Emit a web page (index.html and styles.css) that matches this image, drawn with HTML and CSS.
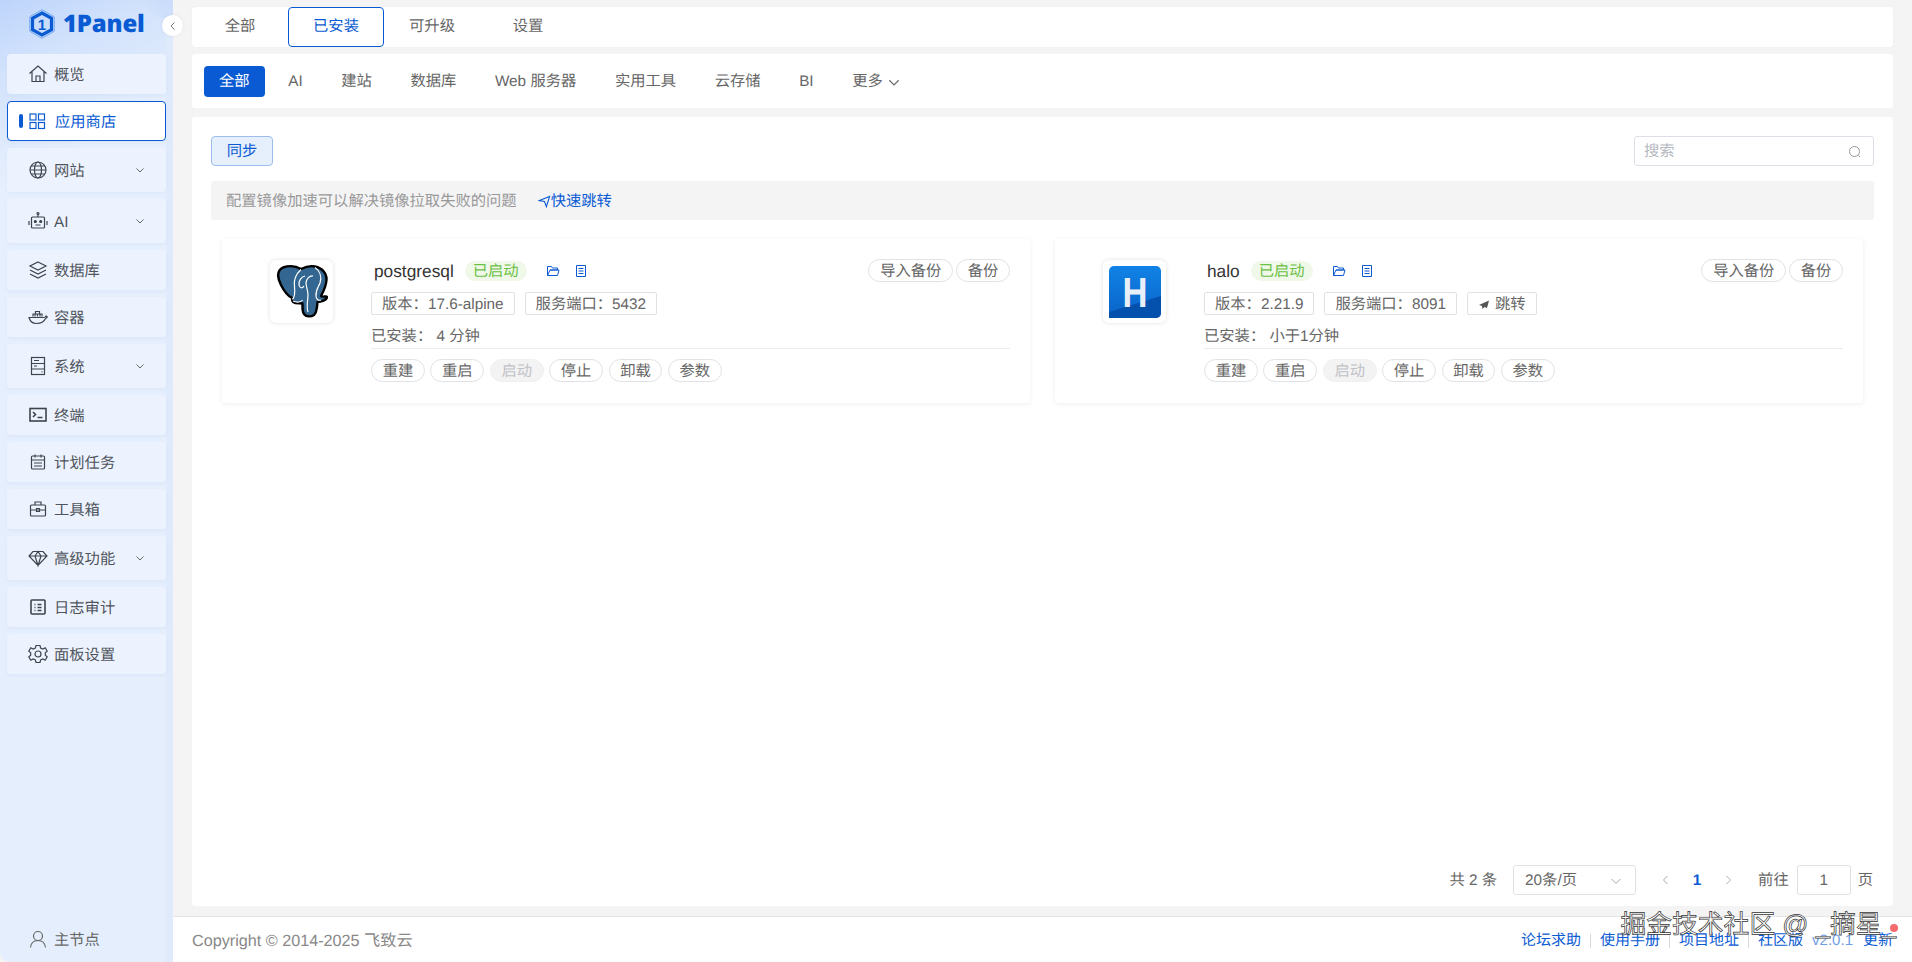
FILE: index.html
```html
<!DOCTYPE html>
<html lang="zh-CN">
<head>
<meta charset="utf-8">
<title>1Panel</title>
<link rel="stylesheet" href="styles.css">
</head>
<body>
<div class="app">
  <aside class="sidebar">
    <div class="logo">
      <svg class="logo-mark" viewBox="0 0 26 30"><path d="M13 .8 25.200 7.700v14.600L13 29.200.8 22.300V7.700z" fill="none" stroke="#6ea6f3" stroke-width="1"/><path d="M13 4 22.500 9.300v11.400L13 26 3.500 20.700V9.300z" fill="none" stroke="#0a5bd3" stroke-width="3.200"/><text x="13" y="20.500" text-anchor="middle" class="logo-one">1</text></svg>
      <span class="logo-text">1Panel</span>
    </div>
    <span class="collapse"><svg viewBox="0 0 12 12"><path d="M7.500 2.500 4 6l3.500 3.500" fill="none" stroke="#777" stroke-width="1"/></svg></span>
    <nav class="nav">
      <a class="item"><svg class="ico" viewBox="0 0 20 20"><path d="M1.500 9.500 10 2l8.500 7.500M4 8v9.500h12V8M8 17.500V12h4v5.500" /></svg><span>概览</span></a>
      <a class="item active"><i class="bar"></i><svg class="ico" viewBox="0 0 20 20"><rect x="3" y="3" width="6" height="6"/><rect x="11.500" y="3" width="6" height="6"/><rect x="3" y="11.500" width="6" height="6"/><rect x="11.500" y="11.500" width="6" height="6"/></svg><span>应用商店</span></a>
      <a class="item tall"><svg class="ico" viewBox="0 0 20 20"><circle cx="10" cy="10" r="8"/><ellipse cx="10" cy="10" rx="3.500" ry="8"/><path d="M2 10h16M3 6h14M3 14h14"/></svg><span>网站</span><svg class="chev" viewBox="0 0 12 12"><path d="M2.500 4.500 6 8l3.500-3.500"/></svg></a>
      <a class="item tall"><svg class="ico" viewBox="0 0 20 20"><rect x="3.500" y="6" width="13" height="11" rx="1"/><path d="M10 6V3M1 10v4M19 10v4M7.500 14h5"/><circle cx="10" cy="2.500" r="1"/><circle cx="7.300" cy="10.500" r="1" fill="#444"/><circle cx="12.700" cy="10.500" r="1" fill="#444"/></svg><span>AI</span><svg class="chev" viewBox="0 0 12 12"><path d="M2.500 4.500 6 8l3.500-3.500"/></svg></a>
      <a class="item"><svg class="ico" viewBox="0 0 20 20"><path d="M10 2 18 6l-8 4-8-4zM2 10l8 4 8-4M2 14l8 4 8-4"/></svg><span>数据库</span></a>
      <a class="item"><svg class="ico" viewBox="0 0 20 20"><path d="M1 10.500h15c1 0 2-1.500 2-1.500s1 1 1.500.5c-.5 1.500-2 2-2 2-1.500 3.500-5 5-9 5-4 0-6.500-2.500-7.500-6zM5 9.500V7h9v2.500M7 9.500V7M9.500 9.500V7M12 9.500V7M7.500 7V4.500h4V7"/></svg><span>容器</span></a>
      <a class="item tall"><svg class="ico" viewBox="0 0 20 20"><rect x="3.500" y="1.500" width="13" height="17"/><path d="M3.500 7.500h13M3.500 13h13M6 4.500h5M6 10h3M13.500 15.800h1"/></svg><span>系统</span><svg class="chev" viewBox="0 0 12 12"><path d="M2.500 4.500 6 8l3.500-3.500"/></svg></a>
      <a class="item"><svg class="ico thick" viewBox="0 0 20 20"><rect x="2" y="3.500" width="16" height="12.500"/><path d="M5 7l2.500 2.500L5 12M9.500 12.500h5"/></svg><span>终端</span></a>
      <a class="item"><svg class="ico" viewBox="0 0 20 20"><rect x="3.500" y="4" width="13" height="13" rx="1"/><path d="M3.500 8h13M7 2.500v3M13 2.500v3M6 11h8M6 14h8"/></svg><span>计划任务</span></a>
      <a class="item"><svg class="ico" viewBox="0 0 20 20"><rect x="2.500" y="6" width="15" height="11" rx="1"/><path d="M7 6V3h6v3M2.500 11h15M8.500 9.500h3v3h-3z"/></svg><span>工具箱</span></a>
      <a class="item tall"><svg class="ico" viewBox="0 0 20 20"><path d="M5 3.500h10L19 8l-9 9.500L1 8zM1 8h18M7 8l3 9.500L13 8l-3-4.500z"/></svg><span>高级功能</span><svg class="chev" viewBox="0 0 12 12"><path d="M2.500 4.500 6 8l3.500-3.500"/></svg></a>
      <a class="item"><svg class="ico thick" viewBox="0 0 20 20"><rect x="3" y="3" width="14" height="14" rx="1"/><path d="M6.500 7.500h1M9.500 7.500h4M6.500 10.500h1M9.500 10.500h4M6.500 13.500h1M9.500 13.500h4" /></svg><span>日志审计</span></a>
      <a class="item"><svg class="ico" viewBox="0 0 20 20"><path d="M8 1.500h4l.6 2.500 2.300 1 2.300-1.300 2 3.400-1.900 1.700v2.400l1.900 1.700-2 3.400-2.300-1.300-2.300 1-.6 2.500H8l-.6-2.500-2.300-1-2.300 1.300-2-3.400 1.900-1.700V8.800L.8 7.100l2-3.400L5.100 5l2.300-1z"/><circle cx="10" cy="10" r="3"/></svg><span>面板设置</span></a>
    </nav>
    <div class="node"><svg class="ico grey" viewBox="0 0 20 20"><circle cx="10" cy="7" r="4.500"/><path d="M2.500 18.500c.5-4.500 3.500-7 7.500-7s7 2.500 7.500 7"/></svg><span>主节点</span></div>
  </aside>

  <div class="right">
    <main class="main">
      <div class="tabs">
        <a class="tab">全部</a><a class="tab on">已安装</a><a class="tab">可升级</a><a class="tab">设置</a>
      </div>
      <div class="filters">
        <a class="fbtn sel">全部</a><a class="fbtn">AI</a><a class="fbtn">建站</a><a class="fbtn">数据库</a><a class="fbtn">Web 服务器</a><a class="fbtn">实用工具</a><a class="fbtn">云存储</a><a class="fbtn">BI</a><a class="fbtn">更多<svg class="chev small" viewBox="0 0 12 12"><path d="M2 4.500 6 8.500l4-4"/></svg></a>
      </div>
      <section class="content">
        <div class="head">
          <a class="sync">同步</a>
          <div class="search"><span>搜索</span><svg viewBox="0 0 14 14"><circle cx="6.500" cy="6.500" r="5"/><path d="M10.500 10.500l1.500 1.500"/></svg></div>
        </div>
        <div class="banner"><span>配置镜像加速可以解决镜像拉取失败的问题</span><a class="jump"><svg viewBox="0 0 14 14"><path d="M1.500 6 12.500 1.500 9 12.500 7 7z"/></svg>快速跳转</a></div>
        <div class="cards">
          <article class="card">
            <div class="thumb">
              <svg class="pg" viewBox="-1 -1 52 55">
                <path d="M6 2.500C12 .5 19 1 24 4 28 2 33 .5 38 1.500 45 3 50 8 49.500 15 49 22 46 27 44 31 46 33 49 30 50 32 50 35 44 37 40.500 37 40 42 40 47 37 50 34 52 29 52 27 49 25 46 25.500 42 25.500 38.500 22 38 19 39 16 37 15 36 15 34 15 33 11 31 7 26 4 20 1 14-1 6 6 2.500z" fill="#336791" stroke="#000" stroke-width="2.400" stroke-linejoin="round"/>
                <path d="M24 4.500C19 9 16.500 15 17.500 22 18 27 18.500 31 15.500 34.500M38 2.500C43 6 45 12 43 18 41.500 22 38.500 25 39 31 39.200 34 41 36 44 35M28 11C24 12 21.500 16 22 20 22.500 23 25.500 24 27 21M36 11C32.500 10.500 29 14 29 18 29 22 31 25 31 30 31 36 29 41 31 47M16 36C20 38 24 37 25.500 35" fill="none" stroke="#fff" stroke-width="1.200"/>
              </svg>
            </div>
            <div class="info">
              <div class="row1">
                <span class="name">postgresql</span><span class="status">已启动</span>
                <svg class="mini first" viewBox="0 0 14 14"><path d="M1.500 11.500v-9h4l1 1.500h5v2H4l-2.500 5.500h10L13 6H4"/></svg>
                <svg class="mini" viewBox="0 0 14 14"><path d="M2.500 1.500h9v11h-9zM4.500 4.500h5M4.500 7h5M4.500 9.500h5"/></svg>
                <span class="spacer"></span>
                <a class="pill">导入备份</a><a class="pill">备份</a>
              </div>
              <div class="row2"><span class="tag">版本：17.6-alpine</span><span class="tag">服务端口：5432</span></div>
              <div class="row3">已安装： 4 分钟</div>
              <div class="row4"><a class="pill">重建</a><a class="pill">重启</a><a class="pill off">启动</a><a class="pill">停止</a><a class="pill">卸载</a><a class="pill">参数</a></div>
            </div>
          </article>
          <article class="card">
            <div class="thumb">
              <svg class="halo" viewBox="0 0 52 52"><defs><linearGradient id="hg" x1="0" y1="0" x2="0" y2="1"><stop offset="0" stop-color="#1183e6"/><stop offset="1" stop-color="#0a62c7"/></linearGradient></defs><rect width="52" height="52" rx="5" fill="url(#hg)"/><path d="M0 52V46L52 30v17a5 5 0 0 1-5 5z" fill="#0450ad"/><text x="26" y="40.500" text-anchor="middle" class="halo-h" textLength="25" lengthAdjust="spacingAndGlyphs">H</text></svg>
            </div>
            <div class="info">
              <div class="row1">
                <span class="name">halo</span><span class="status">已启动</span>
                <svg class="mini first" viewBox="0 0 14 14"><path d="M1.500 11.500v-9h4l1 1.500h5v2H4l-2.500 5.500h10L13 6H4"/></svg>
                <svg class="mini" viewBox="0 0 14 14"><path d="M2.500 1.500h9v11h-9zM4.500 4.500h5M4.500 7h5M4.500 9.500h5"/></svg>
                <span class="spacer"></span>
                <a class="pill">导入备份</a><a class="pill">备份</a>
              </div>
              <div class="row2"><span class="tag">版本：2.21.9</span><span class="tag">服务端口：8091</span><span class="tag"><svg class="send" viewBox="0 0 12 12"><path d="M11 1.500 1 6l3 1 .5 3 2-2 2.500 1z"/></svg>跳转</span></div>
              <div class="row3">已安装： 小于1分钟</div>
              <div class="row4"><a class="pill">重建</a><a class="pill">重启</a><a class="pill off">启动</a><a class="pill">停止</a><a class="pill">卸载</a><a class="pill">参数</a></div>
            </div>
          </article>
        </div>
        <div class="pager">
          <span>共 2 条</span>
          <div class="select"><span>20条/页</span><svg viewBox="0 0 12 12"><path d="M1.500 4 6 8.500 10.500 4"/></svg></div>
          <svg class="arrow" viewBox="0 0 12 12"><path d="M7.500 2 3.500 6l4 4"/></svg>
          <b class="cur">1</b>
          <svg class="arrow next" viewBox="0 0 12 12"><path d="M4.500 2l4 4-4 4"/></svg>
          <span class="goto">前往</span>
          <div class="pageinput">1</div>
          <span>页</span>
        </div>
      </section>
    </main>
    <footer class="footer">
      <span class="copy">Copyright © 2014-2025 飞致云</span>
      <div class="links"><a>论坛求助</a><i></i><a>使用手册</a><i></i><a>项目地址</a><i></i><a>社区版</a><a class="ver">v2.0.1</a><a class="upd">更新</a></div>
      <span class="dot"></span>
      <span class="watermark">掘金技术社区 @ _摘星_</span>
    </footer>
  </div>
</div>
</body>
</html>
```
FILE: styles.css
```css
* { box-sizing: border-box; }
html, body { margin: 0; height: 100%; }
body {
  font-family: "Liberation Sans", "Noto Sans CJK SC", sans-serif;
  font-size: 15.300px;
  line-height: 20px;
  text-rendering: geometricPrecision;
  color: #646a73;
  background: #f4f4f5;
  overflow: hidden;
}
a { color: inherit; text-decoration: none; }
.app { display: flex; height: 962px; }

/* sidebar */
.sidebar {
  position: relative;
  flex: 0 0 173px;
  display: flex;
  flex-direction: column;
  padding: 0 7px;
  border-bottom-left-radius: 10px;
  background:
    radial-gradient(circle at 168px -8px, #c6daf9 0, #d0e1fb 26px, rgba(226,236,252,0) 27px),
    linear-gradient(90deg, rgba(223,234,252,0) 165px, #dfeafc 167px),
    linear-gradient(155deg, #bdd4fb 0, #d3e3fc 70px, #e6effd 170px, #e5eefc 100%);
}
.logo { height: 54px; display: flex; align-items: center; padding: 0 0 6px 22px; gap: 8px; }
.logo-mark { width: 26px; height: 30px; }
.logo-one { font: 700 15px "Liberation Sans", sans-serif; fill: #0a5bd3; }
.logo-text { font: 800 24px/30px "Open Sans", sans-serif; color: #0a5bd3; letter-spacing: -.2px; }
.collapse {
  position: absolute; left: 162px; top: 15px;
  width: 21px; height: 21px; border-radius: 50%;
  background: #fff; display: flex; align-items: center; justify-content: center;
  box-shadow: 0 0 4px rgba(0,0,0,.06);
  z-index: 2;
}
.collapse svg { width: 12px; height: 12px; }
.nav { display: flex; flex-direction: column; gap: 7px; }
.item {
  position: relative;
  height: 40px;
  display: flex; align-items: center;
  padding-left: 21px;
  border-radius: 4px;
  background: #edf3fe;
  box-shadow: 0 2px 3px rgba(170,195,235,.14);
  color: #50555d;
}
.item span, .node span { padding-top: 4px; }
.item.tall { height: 44px; }
.item .ico { margin-right: 6px; }
.ico { width: 20px; height: 20px; flex: none; fill: none; stroke: #3f444c; stroke-width: 1.200; }
.ico.thick { stroke-width: 1.600; }
.ico.grey { stroke: #666; }
.chev { width: 12px; height: 12px; fill: none; stroke: #666; stroke-width: 1; margin-left: auto; margin-right: 20px; }
.chev.small { width: 14px; height: 14px; margin: 0 0 0 4px; }
.item.active {
  background: #fff;
  border: 1px solid #0a5bd3;
  color: #0a5bd3;
  padding-left: 11px;
}
.item.active .ico { stroke: #0a5bd3; margin-right: 8px; }
.bar { width: 4px; height: 14px; border-radius: 2px; background: #0a5bd3; margin-right: 4px; }
.node {
  margin-top: auto;
  height: 46px;
  display: flex; align-items: center; gap: 6px;
  padding-left: 21px;
  color: #666;
}

/* right column */
.right { flex: 1; min-width: 0; display: flex; flex-direction: column; }
.main { flex: 1; min-height: 0; display: flex; flex-direction: column; padding: 7px 19px 10px; }
.tabs {
  height: 40px; display: flex; background: #fff; border-radius: 3px;
  box-shadow: 0 0 1px rgba(0,0,0,.1);
}
.tab {
  width: 96px; display: flex; align-items: center; justify-content: center;
  color: #666;
}
.tab.on { border: 1px solid #0a5bd3; border-radius: 4px; color: #0a5bd3; }
.filters {
  margin-top: 7px; height: 54px; display: flex; align-items: center; gap: 8.600px;
  padding-left: 12px; background: #fff; border-radius: 3px;
}
.fbtn { height: 31px; padding: 2px 15px 0; display: flex; align-items: center; color: #666; border-radius: 4px; white-space: nowrap; }
.fbtn.sel { background: #0a5bd3; color: #fff; }
.content {
  margin-top: 9px; flex: 1; min-height: 0;
  display: flex; flex-direction: column;
  padding: 19px 19px 11px;
  background: #fff; border-radius: 3px;
}
.head { display: flex; justify-content: space-between; height: 30px; }
.sync {
  width: 62px; padding-top: 2px; display: flex; align-items: center; justify-content: center;
  background: #e6effc; border: 1px solid #9dbdee; border-radius: 4px; color: #0a5bd3;
}
.search {
  width: 240px; display: flex; align-items: center; justify-content: space-between;
  padding: 2px 11px 0 9px; border: 1px solid #dcdfe6; border-radius: 3px; color: #b5b8bf;
}
.search svg { width: 14px; height: 14px; fill: none; stroke: #999; stroke-width: 1; }
.banner {
  margin-top: 15px; height: 39px; display: flex; align-items: center; padding: 2px 0 0 15px;
  background: #f4f4f5; border-radius: 3px; color: #999;
}
.jump { display: flex; align-items: center; margin-left: 21px; color: #0a5bd3; }
.jump svg { width: 13px; height: 13px; fill: none; stroke: #0a5bd3; stroke-width: 1.200; }
.cards { margin-top: 19px; padding: 0 11px; display: grid; grid-template-columns: 1fr 1fr; gap: 25px; }
.card {
  height: 164px; display: flex; padding: 20px 20px 0 48px;
  background: #fff; border-radius: 3px;
  box-shadow: 0 1px 5px rgba(0,0,0,.07);
}
.thumb {
  width: 63px; height: 63px; flex: none; margin-top: 1px; margin-right: 38px;
  display: flex; align-items: center; justify-content: center;
  border-radius: 6px; box-shadow: 0 0 4px rgba(0,0,0,.13);
}
.pg { width: 52px; height: 55px; }
.halo { width: 52px; height: 52px; }
.halo-h { font: 700 42px "Liberation Sans", sans-serif; fill: #e9eff8; }
.info { flex: 1; min-width: 0; }
.row1 { display: flex; align-items: center; height: 23px; }
.name { font-size: 17.300px; color: #333; margin: 0 11px 0 3px; }
.status {
  height: 20px; padding: 2px 8px 0; display: flex; align-items: center;
  border-radius: 10px; background: #eff8e9; color: #6cc044;
}
.mini { width: 14px; height: 14px; fill: none; stroke: #0a5bd3; stroke-width: 1; }
.mini.first { margin: 0 14px 0 19px; }
.spacer { flex: 1; }
.pill {
  height: 23px; padding: 2px 10.700px 0; display: inline-flex; align-items: center;
  border: 1px solid #e0e2e6; border-radius: 12px; color: #666; background: #fff;
  white-space: nowrap;
}
.row1 .pill + .pill { margin-left: 3px; }
.pill.off { background: #f3f3f4; color: #c0c2c6; border-color: #f0f0f1; }
.row2 { display: flex; gap: 10px; margin-top: 10px; }
.tag {
  height: 23px; padding: 2px 10px 0; display: inline-flex; align-items: center;
  border: 1px solid #dfe1e5; border-radius: 2px; color: #666; white-space: nowrap;
}
.send { width: 12px; height: 12px; fill: #555; margin-right: 5px; }
.row3 { height: 34px; line-height: 43px; border-bottom: 1px solid #ebecee; color: #666; white-space: pre; }
.row4 { display: flex; gap: 5.400px; margin-top: 10px; }
.pager { margin-top: auto; display: flex; align-items: center; justify-content: flex-end; padding-right: 1px; color: #666; height: 30px; }
.pager > span, .cur { padding-top: 2px; }
.select {
  width: 123px; height: 30px; margin-left: 16px; display: flex; align-items: center; justify-content: space-between;
  padding: 2px 13px 0 11px; border: 1px solid #dfe1e5; border-radius: 3px;
}
.select svg { width: 12px; height: 12px; fill: none; stroke: #aaa; stroke-width: 1; }
.arrow { width: 12px; height: 12px; fill: none; stroke: #aaa; stroke-width: 1; margin-left: 24px; }
.cur { width: 50px; text-align: center; color: #0a5bd3; }
.arrow.next { margin-left: 0; }
.goto { margin-left: 24px; }
.pageinput {
  width: 54px; height: 30px; margin: 0 7px 0 8px; padding-top: 2px; display: flex; align-items: center; justify-content: center;
  border: 1px solid #dfe1e5; border-radius: 3px;
}
.footer {
  position: relative;
  height: 46px; flex: none; display: flex; align-items: center; justify-content: space-between;
  padding: 2px 19px 0; background: #fff; border-top: 1px solid #e6e6e8;
}
.copy { color: #888; font-size: 16.200px; }
.links { display: flex; align-items: center; color: #0a5bd3; font-size: 15px; }
.links i { width: 1px; height: 14px; margin: 0 9px; background: #d6d8dc; }
.ver { margin-left: 9px; color: #6f9de4; }
.upd { margin-left: 10px; }
.dot { position: absolute; right: 14px; top: 7px; width: 8px; height: 8px; border-radius: 50%; background: #f56c6c; }
.watermark {
  position: absolute; right: 16px; top: -7px;
  font-size: 25.800px; line-height: 30px; white-space: nowrap;
  color: #fff; -webkit-text-stroke: .7px #333;
}
```
